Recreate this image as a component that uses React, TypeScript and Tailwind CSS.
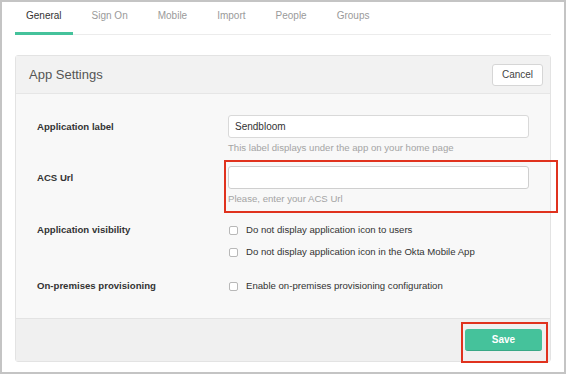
import { useState } from "react";

const tabs = ["General", "Sign On", "Mobile", "Import", "People", "Groups"];

function Checkbox({ label }: { label: string }) {
  return (
    <label className="flex items-center gap-[8px] text-[9.6px] leading-[12px] text-[#333]">
      <span className="w-[9px] h-[9px] rounded-[2px] border border-[#b8b8b8] bg-white" />
      {label}
    </label>
  );
}

export default function App() {
  const [appLabel, setAppLabel] = useState("Sendbloom");

  return (
    <div
      className="relative w-[566px] h-[374px] bg-white border-2 border-[#c4c4c4] overflow-hidden"
      style={{ fontFamily: '"Liberation Sans", Arial, sans-serif' }}
    >
      {/* Tabs */}
      <div className="mx-[13px] flex gap-[8px] border-b border-[#ececec] h-[33px]">
        {tabs.map((tab, i) => (
          <div
            key={tab}
            className={`px-[11px] pt-[8px] text-[10px] leading-[12px] ${
              i === 0
                ? "text-[#333] border-b-[3px] border-[#45c29b] -mb-[1px]"
                : "text-[#9a9a9a]"
            }`}
          >
            {tab}
          </div>
        ))}
      </div>

      {/* Card */}
      <div className="mx-[13px] mt-[20px] w-[536px] border border-[#e3e3e3] rounded-[3px] bg-[#f8f8f8]">
        {/* Header */}
        <div className="h-[38px] bg-[#f2f2f2] border-b border-[#e6e6e6] flex items-center justify-between pl-[13px] pr-[7px]">
          <span className="text-[13px] text-[#555]">App Settings</span>
          <button className="h-[22px] w-[51px] bg-white border border-[#d6d6d6] rounded-[3px] text-[10px] text-[#444]">
            Cancel
          </button>
        </div>

        {/* Body */}
        <div className="pl-[21px] pr-[21px] pt-[21px] pb-[26px] flex flex-col text-[9.6px] leading-[12px]">
          <div className="flex">
            <div className="w-[192px] pt-[6px] font-bold text-[#333]">Application label</div>
            <div className="flex-1">
              <input
                value={appLabel}
                onChange={(e) => setAppLabel(e.target.value)}
                className="block w-[301px] h-[23px] bg-white border border-[#d9d9d9] rounded-[3px] px-[6px] text-[10px] text-[#333] outline-none"
              />
              <div className="mt-[4px] text-[#a4a4a4]">This label displays under the app on your home page</div>
            </div>
          </div>

          <div className="flex mt-[12px]">
            <div className="w-[192px] pt-[6px] font-bold text-[#333]">ACS Url</div>
            <div className="flex-1">
              <input className="block w-[301px] h-[23px] bg-white border border-[#cfcfcf] rounded-[3px] px-[6px] text-[10px] outline-none" />
              <div className="mt-[4px] text-[#a4a4a4]">Please, enter your ACS Url</div>
            </div>
          </div>

          <div className="flex mt-[19px]">
            <div className="w-[192px] font-bold text-[#333]">Application visibility</div>
            <div className="flex-1 flex flex-col gap-[10px]">
              <Checkbox label="Do not display application icon to users" />
              <Checkbox label="Do not display application icon in the Okta Mobile App" />
            </div>
          </div>

          <div className="flex mt-[22px]">
            <div className="w-[192px] font-bold text-[#333]">On-premises provisioning</div>
            <div className="flex-1">
              <Checkbox label="Enable on-premises provisioning configuration" />
            </div>
          </div>
        </div>

        {/* Footer */}
        <div className="h-[43px] bg-[#f0f0f0] border-t border-[#e3e3e3] flex items-center justify-end pr-[8px]">
          <button className="w-[77px] h-[22px] rounded-[3px] bg-[#45c29b] border-b border-[#3aa886] text-white text-[10px] font-bold">
            Save
          </button>
        </div>
      </div>

      {/* Annotation boxes */}
      <div className="absolute left-[222px] top-[158px] w-[334px] h-[53px] border-2 border-[#e0321e]" />
      <div className="absolute left-[459px] top-[320px] w-[87px] h-[41px] border-2 border-[#e0321e]" />
    </div>
  );
}
